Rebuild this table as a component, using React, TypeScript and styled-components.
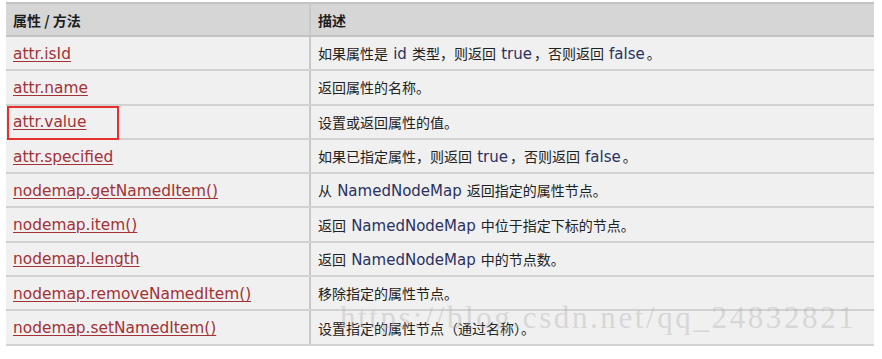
import React from 'react';
import styled, { createGlobalStyle } from 'styled-components';

const GlobalStyle = createGlobalStyle`
  html, body {
    margin: 0;
    padding: 0;
    background: #fff;
  }
`;

const Page = styled.div`
  position: relative;
  width: 882px;
  height: 359px;
  padding: 2px 8px 0 6px;
  box-sizing: border-box;
  overflow: hidden;
`;

const Table = styled.table`
  width: 868px;
  border-collapse: collapse;
  table-layout: fixed;
  font-family: 'DejaVu Sans', 'Noto Sans CJK SC', sans-serif;
`;

const HeadCell = styled.th<{ wide?: boolean }>`
  width: ${({ wide }) => (wide ? 'auto' : '289px')};
  height: 31px;
  padding: 0 7px;
  text-align: left;
  background: #d6d6d6;
  border: 2px solid #c2c2c2;
  border-left: none;
  border-right: ${({ wide }) => (wide ? 'none' : '2px solid #c8c8c8')};
  font-family: 'Noto Sans CJK SC', sans-serif;
  font-size: 14px;
  font-weight: 700;
  color: #1e1e1e;
`;

const Row = styled.tr`
  height: 34.3px;
  background: #f0f0f0;
`;

const Cell = styled.td<{ first?: boolean }>`
  position: relative;
  padding: 0 7px;
  border-bottom: 2px solid #d2d2d2;
  border-right: ${({ first }) => (first ? '2px solid #c8c8c8' : 'none')};
  vertical-align: middle;
  white-space: nowrap;
`;

const Link = styled.a`
  font-family: 'DejaVu Sans', sans-serif;
  font-size: 15.4px;
  color: #a23236;
  text-decoration: underline;
  text-underline-offset: 2px;
`;

const Desc = styled.span`
  font-family: 'Noto Sans CJK SC', sans-serif;
  font-size: 14px;
  color: #222;
`;

const Code = styled.span`
  margin: 0 2px;
  font-family: 'DejaVu Sans', sans-serif;
  font-size: 15px;
  color: #2b3160;
`;

const Highlight = styled.div`
  position: absolute;
  left: 1px;
  top: 0;
  width: 108px;
  height: 30px;
  border: 2px solid #e62f2f;
  pointer-events: none;
`;

const Watermark = styled.div`
  position: absolute;
  left: 340px;
  top: 300px;
  font-family: 'Liberation Serif', serif;
  font-size: 31px;
  letter-spacing: 2.6px;
  color: rgba(175, 175, 175, 0.4);
  pointer-events: none;
  white-space: nowrap;
`;

type Item = { name: string; desc: React.ReactNode; marked?: boolean };

const items: Item[] = [
  {
    name: 'attr.isId',
    desc: (
      <>
        如果属性是 <Code>id</Code> 类型，则返回 <Code>true</Code>，否则返回 <Code>false</Code>。
      </>
    ),
  },
  { name: 'attr.name', desc: '返回属性的名称。' },
  { name: 'attr.value', desc: '设置或返回属性的值。', marked: true },
  {
    name: 'attr.specified',
    desc: (
      <>
        如果已指定属性，则返回 <Code>true</Code>，否则返回 <Code>false</Code>。
      </>
    ),
  },
  {
    name: 'nodemap.getNamedItem()',
    desc: (
      <>
        从 <Code>NamedNodeMap</Code> 返回指定的属性节点。
      </>
    ),
  },
  {
    name: 'nodemap.item()',
    desc: (
      <>
        返回 <Code>NamedNodeMap</Code> 中位于指定下标的节点。
      </>
    ),
  },
  {
    name: 'nodemap.length',
    desc: (
      <>
        返回 <Code>NamedNodeMap</Code> 中的节点数。
      </>
    ),
  },
  { name: 'nodemap.removeNamedItem()', desc: '移除指定的属性节点。' },
  { name: 'nodemap.setNamedItem()', desc: '设置指定的属性节点（通过名称）。' },
];

const App: React.FC = () => {
  return (
    <Page>
      <GlobalStyle />
      <Table>
        <thead>
          <tr>
            <HeadCell>属性 / 方法</HeadCell>
            <HeadCell wide>描述</HeadCell>
          </tr>
        </thead>
        <tbody>
          {items.map((item) => (
            <Row key={item.name}>
              <Cell first>
                {item.marked && <Highlight />}
                <Link href="#">{item.name}</Link>
              </Cell>
              <Cell>
                <Desc>{item.desc}</Desc>
              </Cell>
            </Row>
          ))}
        </tbody>
      </Table>
      <Watermark>https://blog.csdn.net/qq_24832821</Watermark>
    </Page>
  );
};

export default App;
